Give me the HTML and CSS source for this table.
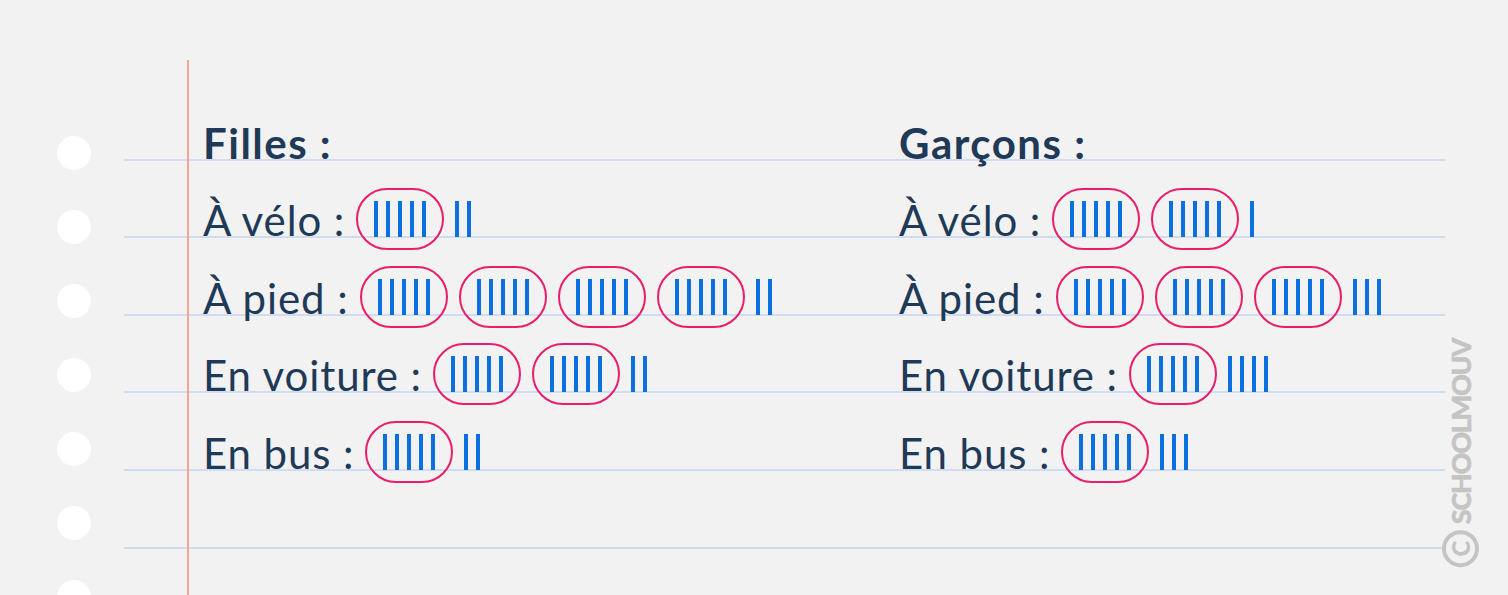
FILE: index.html
```html
<!DOCTYPE html>
<html lang="fr">
<head>
<meta charset="utf-8">
<title>Tableau de pointage</title>
<link rel="stylesheet" href="styles.css">
</head>
<body>
<div class="page">
  <div class="holes">
    <span class="hole"></span><span class="hole"></span><span class="hole"></span><span class="hole"></span>
    <span class="hole"></span><span class="hole"></span><span class="hole"></span>
  </div>
  <div class="sheet">
    <div class="row">
      <div class="cell"><span class="label title">Filles :</span></div>
      <div class="cell"><span class="label title">Garçons :</span></div>
    </div>
    <div class="row">
      <div class="cell">
        <span class="label">À vélo :</span>
        <span class="oval"><i></i><i></i><i></i><i></i><i></i></span>
        <span class="bars"><i></i><i></i></span>
      </div>
      <div class="cell">
        <span class="label">À vélo :</span>
        <span class="oval"><i></i><i></i><i></i><i></i><i></i></span>
        <span class="oval"><i></i><i></i><i></i><i></i><i></i></span>
        <span class="bars"><i></i></span>
      </div>
    </div>
    <div class="row">
      <div class="cell">
        <span class="label">À pied :</span>
        <span class="oval"><i></i><i></i><i></i><i></i><i></i></span>
        <span class="oval"><i></i><i></i><i></i><i></i><i></i></span>
        <span class="oval"><i></i><i></i><i></i><i></i><i></i></span>
        <span class="oval"><i></i><i></i><i></i><i></i><i></i></span>
        <span class="bars"><i></i><i></i></span>
      </div>
      <div class="cell">
        <span class="label">À pied :</span>
        <span class="oval"><i></i><i></i><i></i><i></i><i></i></span>
        <span class="oval"><i></i><i></i><i></i><i></i><i></i></span>
        <span class="oval"><i></i><i></i><i></i><i></i><i></i></span>
        <span class="bars"><i></i><i></i><i></i></span>
      </div>
    </div>
    <div class="row">
      <div class="cell">
        <span class="label">En voiture :</span>
        <span class="oval"><i></i><i></i><i></i><i></i><i></i></span>
        <span class="oval"><i></i><i></i><i></i><i></i><i></i></span>
        <span class="bars"><i></i><i></i></span>
      </div>
      <div class="cell">
        <span class="label">En voiture :</span>
        <span class="oval"><i></i><i></i><i></i><i></i><i></i></span>
        <span class="bars"><i></i><i></i><i></i><i></i></span>
      </div>
    </div>
    <div class="row">
      <div class="cell">
        <span class="label">En bus :</span>
        <span class="oval"><i></i><i></i><i></i><i></i><i></i></span>
        <span class="bars"><i></i><i></i></span>
      </div>
      <div class="cell">
        <span class="label">En bus :</span>
        <span class="oval"><i></i><i></i><i></i><i></i><i></i></span>
        <span class="bars"><i></i><i></i><i></i></span>
      </div>
    </div>
    <div class="row"></div>
  </div>
  <div class="watermark"><span class="copy">C</span><span class="brand">SCHOOLMOUV</span></div>
</div>
</body>
</html>
```
FILE: styles.css
```css
* { box-sizing: border-box; }
html, body { margin: 0; padding: 0; }
body {
  background: #f2f2f2;
  font-family: Lato, "Noto Sans", sans-serif;
  color: #1f3a57;
  overflow: hidden;
}
.page {
  position: relative;
  display: flex;
  height: 595px;
  width: 1508px;
  overflow: hidden;
}
.holes {
  flex: 0 0 124px;
  display: flex;
  flex-direction: column;
  gap: 40px;
  padding: 136px 0 0 57px;
}
.hole {
  flex: 0 0 34px;
  width: 34px;
  height: 34px;
  border-radius: 50%;
  background: #ffffff;
}
.sheet {
  position: relative;
  flex: 0 0 1321px;
  padding-top: 83px;
}
.sheet::before {
  content: "";
  position: absolute;
  left: 63px;
  top: 60px;
  bottom: 0;
  width: 2px;
  background: #f7a48f;
}
.row {
  height: 77.6px;
  border-bottom: 2px solid #cfdcf1;
  display: grid;
  grid-template-columns: 696px 1fr;
  padding-left: 79px;
}
.cell {
  display: flex;
  align-items: flex-end;
  gap: 11px;
}
.label {
  font-size: 42px;
  line-height: 42px;
  letter-spacing: 0.9px;
  margin-bottom: -5px;
  white-space: pre;
}
.title { font-weight: 700; letter-spacing: 1.5px; }
.oval {
  display: flex;
  gap: 8px;
  padding: 11px 16px;
  border: 2px solid #ea1d6c;
  border-radius: 32px;
  margin-bottom: -14px;
}
.bars {
  display: flex;
  gap: 8px;
  margin-bottom: -1px;
}
.oval i, .bars i {
  display: block;
  width: 4px;
  height: 36px;
  background: #0b6fe0;
}
.watermark {
  position: absolute;
  right: 29px;
  bottom: 28px;
  writing-mode: vertical-rl;
  transform: rotate(180deg);
  display: flex;
  align-items: center;
  gap: 6px;
  color: #c4c4c4;
  font-weight: 900;
}
.copy {
  width: 37px;
  height: 37px;
  border: 4px solid #c4c4c4;
  border-radius: 50%;
  display: flex;
  align-items: center;
  justify-content: center;
  font-size: 24px;
  line-height: 1;
  writing-mode: horizontal-tb;
  transform: rotate(90deg);
}
.brand {
  font-size: 27px;
  letter-spacing: -1.3px;
  line-height: 1;
  -webkit-text-stroke: 0.5px #c4c4c4;
}
```
